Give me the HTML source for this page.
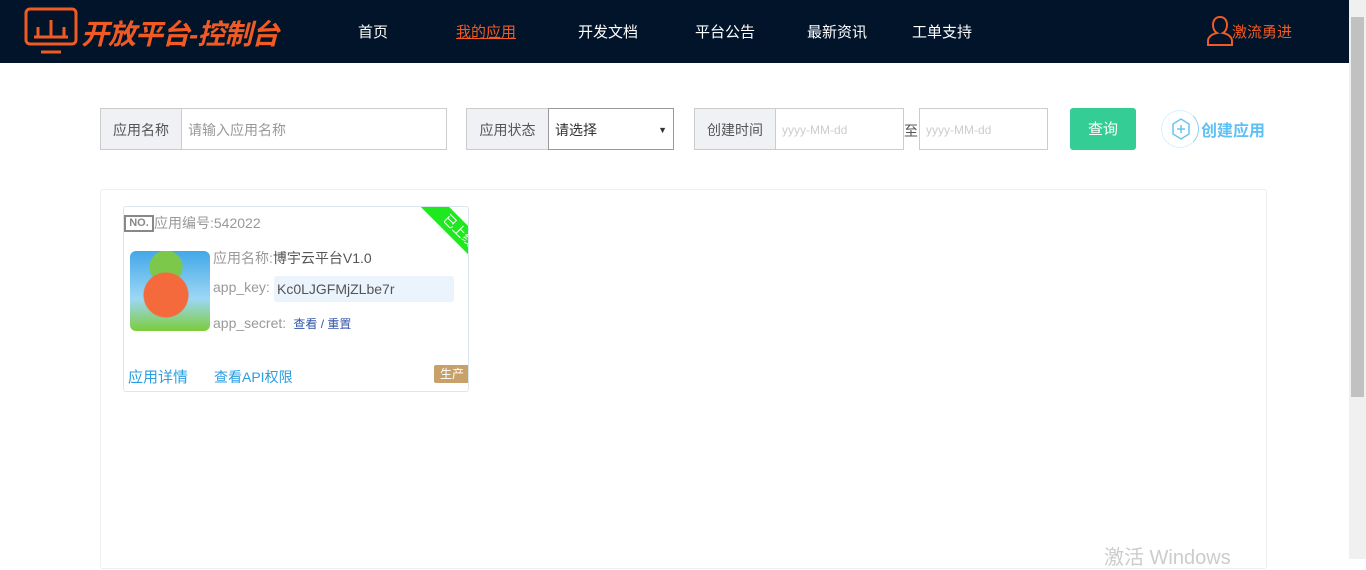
<!DOCTYPE html>
<html><head><meta charset="utf-8"><style>
*{box-sizing:border-box;margin:0;padding:0}
body{width:1366px;height:559px;overflow:hidden;background:#fff;font-family:"Liberation Sans","Noto Sans CJK SC",sans-serif;font-size:14px;color:#555;position:relative}
.nav{position:absolute;left:0;top:0;width:1349px;height:63px;background:#01142a}
.nav a{position:absolute;top:21px;color:#fff;font-size:15px;text-decoration:none}
.abs{position:absolute}
.lbl{position:absolute;top:108px;height:42px;background:#f0f1f5;border:1px solid #ccc;line-height:42px;text-align:center;color:#555;font-size:14px}
.inp{position:absolute;top:108px;height:42px;border:1px solid #ccc;line-height:42px;padding-left:6px;color:#999;font-size:14px;background:#fff}
.sb{position:absolute;right:0;top:0;width:17px;height:559px;background:#f0f0f0}
</style></head><body>
<div class="nav">
<svg class="abs" style="left:24px;top:7px" width="56" height="48" viewBox="0 0 56 48"><rect x="2" y="2" width="50" height="35" rx="4" fill="none" stroke="#f15a22" stroke-width="3"/><path d="M14 30V20M27 30V13M40 30V20M10 30h34M17 45h20" stroke="#f15a22" stroke-width="3" fill="none"/></svg>
<div class="abs" style="left:81px;top:13px;color:#f15a22;font-size:28px;font-weight:bold;font-style:italic;letter-spacing:-1px">开放平台-控制台</div>
<a style="left:358px">首页</a>
<a style="left:456px;color:#f15a22;text-decoration:underline">我的应用</a>
<a style="left:578px">开发文档</a>
<a style="left:695px">平台公告</a>
<a style="left:807px">最新资讯</a>
<a style="left:912px">工单支持</a>
<svg class="abs" style="left:1205px;top:15px" width="30" height="32" viewBox="0 0 30 32"><path d="M15 2c5 0 7 4 7 8s-2 7-4 8c5 1 9 4 9 8v4H3v-4c0-4 4-7 9-8-2-1-4-4-4-8s2-8 7-8z" fill="none" stroke="#f15a22" stroke-width="2"/></svg>
<div class="abs" style="left:1232px;top:21px;color:#f15a22;font-size:15px">激流勇进</div>
</div>
<div class="lbl" style="left:100px;width:82px">应用名称</div>
<div class="inp" style="left:181px;width:266px">请输入应用名称</div>
<div class="lbl" style="left:466px;width:83px">应用状态</div>
<div class="inp" style="left:548px;width:126px;color:#333;border-color:#999">请选择<span style="position:absolute;right:6px;font-size:9px;color:#333">▼</span></div>
<div class="lbl" style="left:694px;width:82px">创建时间</div>
<div class="inp" style="left:775px;width:129px;color:#ccc;font-size:12px">yyyy-MM-dd</div>
<div class="abs" style="left:904px;top:121px;color:#555">至</div>
<div class="inp" style="left:919px;width:129px;color:#ccc;font-size:12px">yyyy-MM-dd</div>
<div class="abs" style="left:1070px;top:108px;width:66px;height:42px;background:#35cd96;border-radius:3px;color:#fff;line-height:44px;text-align:center;font-size:15px">查询</div>
<div class="abs" style="left:1161px;top:110px;width:38px;height:38px;border-radius:50%;border:1px solid #ddeefa;border-right-color:#8fd0f5"></div>
<svg class="abs" style="left:1171px;top:118px" width="20" height="22" viewBox="0 0 20 22"><path d="M10 1l8 5v10l-8 5-8-5V6z" fill="none" stroke="#6cc4f0" stroke-width="1.5"/><path d="M10 7v8M6 11h8" stroke="#6cc4f0" stroke-width="1.5"/></svg>
<div class="abs" style="left:1201px;top:117px;color:#5ec0f5;font-size:16px;font-weight:bold">创建应用</div>
<div class="abs" style="left:100px;top:189px;width:1167px;height:380px;border:1px solid #eee;border-radius:3px"></div>
<div class="abs" style="left:123px;top:206px;width:346px;height:186px;border:1px solid #dde6ee;border-radius:3px;overflow:hidden">
<div class="abs" style="left:280px;top:14px;width:110px;height:20px;background:#1ee81e;transform:rotate(45deg);color:#fff;font-size:13px;text-align:center;line-height:20px">已上线</div>
<div class="abs" style="left:0;top:8px;width:30px;height:17px;border:2px solid #888;font-size:11px;font-weight:bold;color:#888;text-align:center;line-height:13px">NO.</div>
<div class="abs" style="left:30px;top:6px;color:#999">应用编号:542022</div>
<div class="abs" style="left:6px;top:44px;width:80px;height:80px;border-radius:6px;background:radial-gradient(circle at 45% 55%,#f56a3c 0 22px,transparent 23px),radial-gradient(circle at 45% 20%,#7cc84a 0 16px,transparent 17px),linear-gradient(#43a7e8,#9dd7f5 60%,#7ccc3a)"></div>
<div class="abs" style="left:89px;top:41px;color:#999">应用名称:<span style="color:#555">博宇云平台V1.0</span></div>
<div class="abs" style="left:89px;top:72px;color:#999">app_key:</div>
<div class="abs" style="left:150px;top:69px;width:180px;height:26px;background:#ebf3fc;border-radius:3px;padding-left:3px;line-height:26px;color:#555">Kc0LJGFMjZLbe7r</div>
<div class="abs" style="left:89px;top:108px;color:#999">app_secret: <span style="color:#3355aa;font-size:12px">&nbsp;查看 / 重置</span></div>
<div class="abs" style="left:4px;top:159px;color:#2a9ee0;font-size:15px">应用详情</div>
<div class="abs" style="left:90px;top:160px;color:#2a9ee0">查看API权限</div>
<div class="abs" style="left:310px;top:158px;width:36px;height:18px;background:#c8a06a;border-radius:2px;color:#fff;font-size:12px;text-align:center;line-height:18px">生产</div>
</div>
<div class="abs" style="left:1104px;top:541px;color:#ccc;font-size:20px">激活 Windows</div>
<div class="sb"><div style="position:absolute;left:2px;top:17px;width:13px;height:380px;background:#c1c1c1"></div></div>
</body></html>
